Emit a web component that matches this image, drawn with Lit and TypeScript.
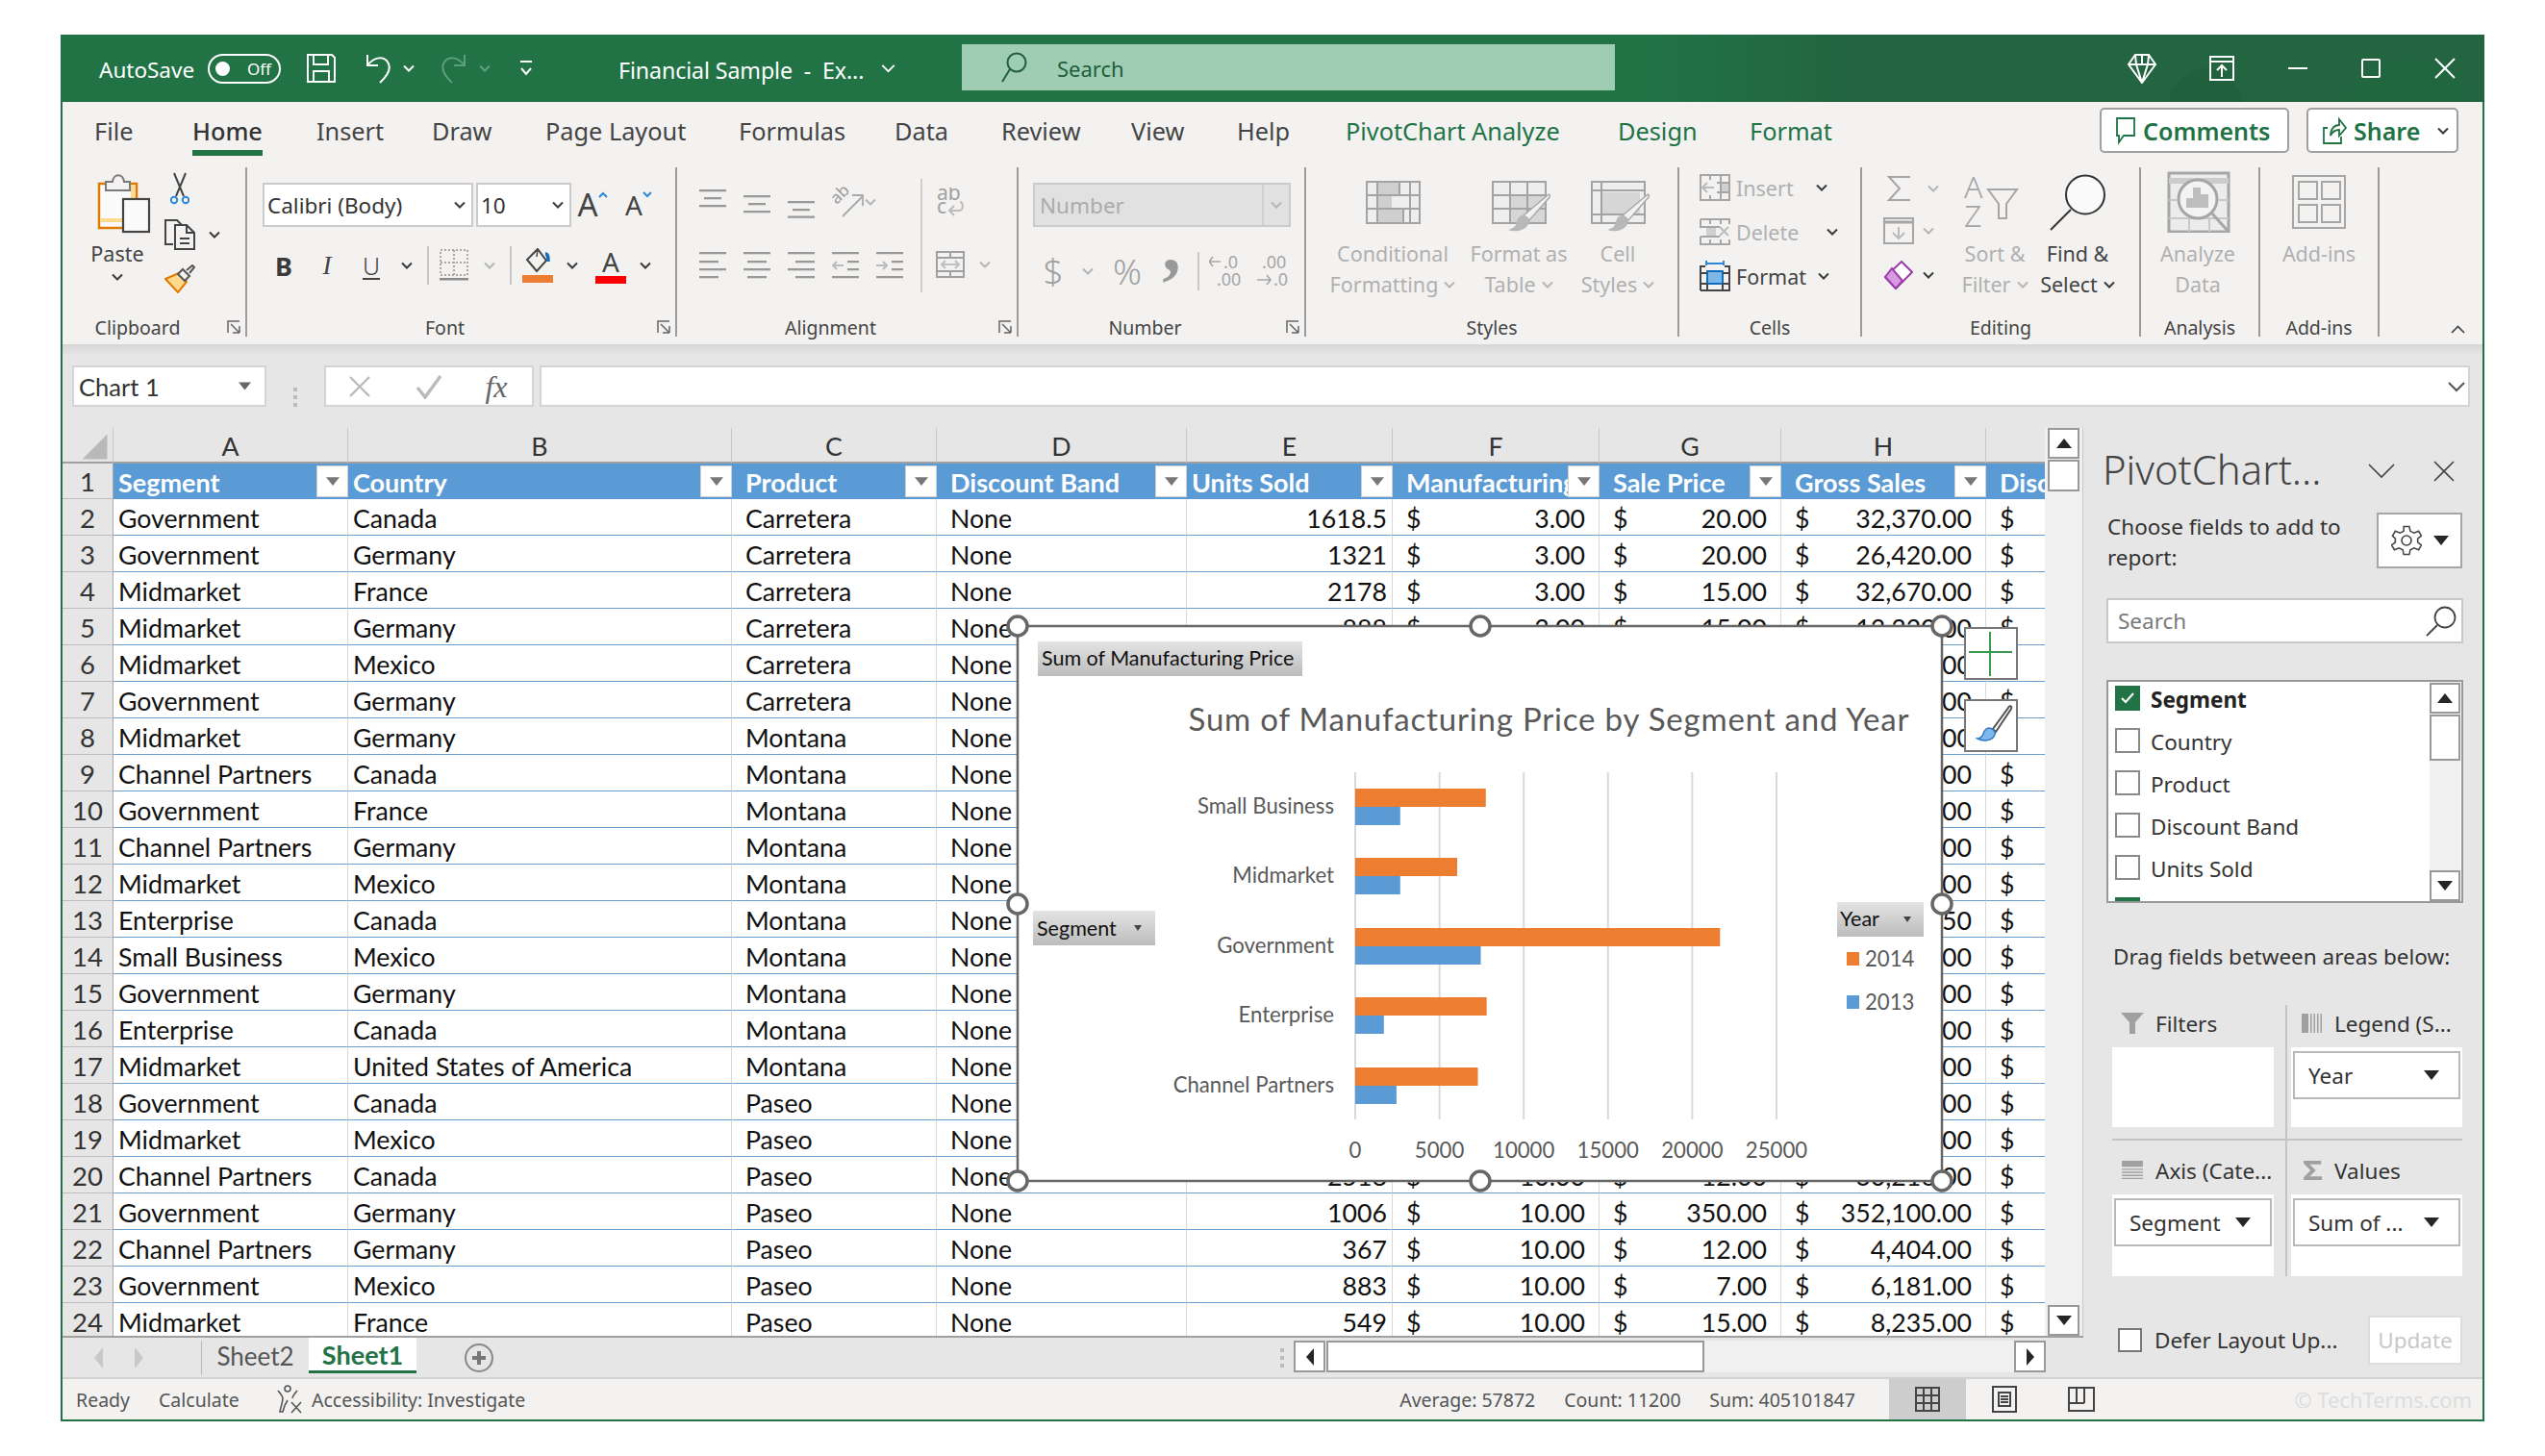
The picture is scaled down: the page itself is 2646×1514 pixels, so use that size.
import { LitElement, html, svg, css } from 'lit';
import { customElement } from 'lit/decorators.js';

const chev = (cls = '') => html`<svg class="chev ${cls}" viewBox="0 0 12 8"><path d="M1 1.5l5 5 5-5"/></svg>`;
const triDown = html`<svg class="tri" viewBox="0 0 16 10"><path d="M0 0h16L8 10z"/></svg>`;
const triUp = html`<svg class="tri" viewBox="0 0 16 10"><path d="M0 10h16L8 0z"/></svg>`;
const launcher = html`<svg class="launch" viewBox="0 0 14 14"><path d="M1 13V1h12M13 13V6M13 13H6M13 13L4 4"/></svg>`;
// one alignment glyph: each bar is [y, x from, x to]
const bars = (list: number[][]) => html`<svg class="i28" viewBox="0 0 28 34">${list.map(b => svg`<rect x=${b[1]} y=${b[0]} width=${b[2] - b[1]} height="2.3" fill="#999"></rect>`)}</svg>`;

const GRID_COLS = [
  { l: '', w: 53 }, { l: 'A', w: 244 }, { l: 'B', w: 399 }, { l: 'C', w: 213 }, { l: 'D', w: 260 },
  { l: 'E', w: 214 }, { l: 'F', w: 215 }, { l: 'G', w: 189 }, { l: 'H', w: 213 }, { l: '', w: 61 },
];
const HEADERS = ['Segment', 'Country', 'Product', 'Discount Band', 'Units Sold', 'Manufacturing Price', 'Sale Price', 'Gross Sales', 'Discounts'];
const ROWS: [string, string, string, string, string, string, string][] = [
  ['Government', 'Canada', 'Carretera', '1618.5', '3.00', '20.00', '32,370.00'],
  ['Government', 'Germany', 'Carretera', '1321', '3.00', '20.00', '26,420.00'],
  ['Midmarket', 'France', 'Carretera', '2178', '3.00', '15.00', '32,670.00'],
  ['Midmarket', 'Germany', 'Carretera', '888', '3.00', '15.00', '13,320.00'],
  ['Midmarket', 'Mexico', 'Carretera', '2470', '3.00', '15.00', '37,050.00'],
  ['Government', 'Germany', 'Carretera', '1513', '3.00', '350.00', '529,550.00'],
  ['Midmarket', 'Germany', 'Montana', '921', '5.00', '15.00', '13,815.00'],
  ['Channel Partners', 'Canada', 'Montana', '2518', '5.00', '12.00', '30,216.00'],
  ['Government', 'France', 'Montana', '1899', '5.00', '20.00', '37,980.00'],
  ['Channel Partners', 'Germany', 'Montana', '1545', '5.00', '12.00', '18,540.00'],
  ['Midmarket', 'Mexico', 'Montana', '2470', '5.00', '15.00', '37,050.00'],
  ['Enterprise', 'Canada', 'Montana', '2665.5', '5.00', '125.00', '333,187.50'],
  ['Small Business', 'Mexico', 'Montana', '958', '5.00', '300.00', '287,400.00'],
  ['Government', 'Germany', 'Montana', '2146', '5.00', '7.00', '15,022.00'],
  ['Enterprise', 'Canada', 'Montana', '345', '5.00', '125.00', '43,125.00'],
  ['Midmarket', 'United States of America', 'Montana', '615', '5.00', '15.00', '9,225.00'],
  ['Government', 'Canada', 'Paseo', '292', '10.00', '20.00', '5,840.00'],
  ['Midmarket', 'Mexico', 'Paseo', '974', '10.00', '15.00', '14,610.00'],
  ['Channel Partners', 'Canada', 'Paseo', '2518', '10.00', '12.00', '30,216.00'],
  ['Government', 'Germany', 'Paseo', '1006', '10.00', '350.00', '352,100.00'],
  ['Channel Partners', 'Germany', 'Paseo', '367', '10.00', '12.00', '4,404.00'],
  ['Government', 'Mexico', 'Paseo', '883', '10.00', '7.00', '6,181.00'],
  ['Midmarket', 'France', 'Paseo', '549', '10.00', '15.00', '8,235.00'],
];

// chart numbers, pixels per unit come from the gridlines
const AXIS_X = 1409;
const UNIT = 87.6 / 5000;
const SERIES = [
  { name: 'Small Business', y: 820, a: 7750, b: 2670 },
  { name: 'Midmarket', y: 892, a: 6050, b: 2670 },
  { name: 'Government', y: 965, a: 21650, b: 7450 },
  { name: 'Enterprise', y: 1037, a: 7800, b: 1700 },
  { name: 'Channel Partners', y: 1110, a: 7280, b: 2450 },
];
const TICKS = [0, 5000, 10000, 15000, 20000, 25000];
const FIELDS = ['Segment', 'Country', 'Product', 'Discount Band', 'Units Sold', 'Year'];

@customElement('app-root')
export class AppRoot extends LitElement {
  static styles = css`
    :host { display: block; width: 2646px; height: 1514px; background: #fff; font-family: 'Noto Sans', sans-serif; color: #444; overflow: hidden; }
    svg { display: block; flex: none; }
    .i28 { width: 28px; height: 34px; }
    .window { box-sizing: border-box; margin: 36px 0 0 63px; width: 2520px; height: 1442px; border: 2px solid #217346; border-top: 0; display: flex; flex-direction: column; background: #f3f2f1; }

    /* title bar */
    .title { height: 70px; flex: none; display: grid; align-items: center; justify-items: center; color: #fff; margin: 0 -2px; padding: 0 2px;
      grid-template-columns: 38px 113px 76px 26px 32px 30px 28px 34px 14px 29px 38px 48px 72px 270px 20px 67px 679px 1fr 74px 92px 66px 86px 68px 5px;
      background: radial-gradient(ellipse 70px 90px at 2230px 90px, #20603c 60%, transparent 62%), radial-gradient(ellipse 100px 70px at 2440px 70px, #20663f 60%, transparent 62%), linear-gradient(90deg, #217346 0, #217346 1650px, #226540 1850px, #226540 100%); }
    .title .left { justify-self: start; margin-top: 3px; }
    .title-text { font-size: 23.2px; white-space: pre; letter-spacing: -0.1px; }
    .autosave { font-size: 22.5px; }
    .toggle { box-sizing: border-box; width: 76px; height: 31px; border: 2px solid #fff; border-radius: 16px; display: flex; align-items: center; justify-content: space-between; padding: 0 8px 0 6px; font-size: 17px; }
    .toggle i { width: 15px; height: 15px; background: #fff; border-radius: 50%; }
    .search { box-sizing: border-box; width: 679px; height: 48px; background: #9fcdb3; display: flex; align-items: center; padding-left: 40px; gap: 31px; color: #215e3d; font-size: 22px; margin-top: -2px; }
    .search span { margin-top: 2px; }
    .title svg.w { stroke: #fff; fill: none; stroke-width: 2; }
    .title svg.w.dim { stroke: #5c9f7b; }
    .title .chev { stroke: #fff; }
    .title .chev.dim { stroke: #5c9f7b; }
    .chev { width: 12px; height: 8px; fill: none; stroke: #3a3a3a; stroke-width: 2; }
    .chev.big { width: 17px; height: 10px; stroke-width: 1.5; }
    .chev.gray { stroke: #b5b5b5; }
    .tri { width: 16px; height: 10px; fill: #262626; }

    /* tabs */
    .tabs { height: 66px; flex: none; box-sizing: border-box; padding: 4px 0 0 33px; display: grid; align-items: start; font-size: 25.3px;
      grid-template-columns: 102px 129px 120px 118px 201px 162px 111px 135px 110px 113px 283px 137px 364px 197px 18px 158px; }
    .tab { height: 52px; line-height: 52px; color: #444; white-space: nowrap; }
    .tab.on span { display: inline-block; box-sizing: border-box; height: 52px; border-bottom: 6px solid #217346; font-weight: 500; color: #333; }
    .tab.ctx { color: #217346; }
    .tbtn { box-sizing: border-box; height: 47px; margin-top: 2px; border: 2px solid #a0a0a0; border-radius: 5px; background: #fff; color: #217346; font-weight: 600; font-size: 25px; display: flex; align-items: center; gap: 7px; padding-left: 14px; }
    .tbtn .chev { margin-left: 11px; }
    .tbtn svg.ic { fill: none; stroke: #217346; stroke-width: 1.8; }

    /* ribbon */
    .ribbon { height: 186px; flex: none; box-sizing: border-box; padding-top: 2px; display: flex; }
    .group { box-sizing: border-box; height: 176px; border-right: 2px solid #9c9c9c; display: flex; flex-direction: column; flex: none; }
    .g-clip { width: 192px; } .g-font { width: 447px; } .g-align { width: 355px; } .g-num { width: 299px; }
    .g-styles { width: 388px; } .g-cells { width: 190px; } .g-edit { width: 290px; } .g-ana { width: 124px; } .g-add { width: 124px; }
    .body { flex: 1; display: flex; min-height: 0; }
    .label { height: 20px; display: flex; align-items: center; font-size: 19.5px; color: #444; }
    .label span { flex: 1; text-align: center; }
    .launch { width: 14px; height: 14px; margin: 0 5px 0 15px; fill: none; stroke: #666; stroke-width: 1.5; }
    .center { display: grid; place-items: center; }

    .paste { margin-left: 20px; width: 74px; padding-top: 6px; display: flex; flex-direction: column; align-items: center; }
    .paste .t { height: 40px; line-height: 40px; font-size: 21.5px; }
    .smalls { width: 72px; }
    .smalls div { display: grid; grid-template-columns: 56px 16px; place-items: center; }
    .s1 { height: 44px; } .s2 { height: 52px; } .s3 { height: 40px; }

    .f-col { padding-left: 16px; }
    .f1 { margin-top: 16px; height: 46px; display: grid; grid-template-columns: 219px 3px 99px 44px 52px; align-items: stretch; }
    .f2 { margin-top: 20px; height: 38px; display: grid; grid-template-columns: 44px 46px 46px 28px 16px 38px 36px 8px 48px 24px 56px 16px; place-items: center; }
    .combo { box-sizing: border-box; background: #fff; border: 2px solid #cbcbcb; display: flex; align-items: center; justify-content: space-between; padding: 0 6px 0 3px; font-size: 22.5px; color: #333; }
    .grow { display: flex; align-items: flex-start; justify-content: center; font-weight: 300; line-height: 46px; color: #444; }
    .grow b { font-weight: 400; }
    .g1 { font-size: 33px; } .g2 { font-size: 28px; }
    .grow svg { margin-top: 9px; width: 10px; height: 7px; fill: none; stroke: #2b88d8; stroke-width: 2; }
    .bold { font-weight: 700; font-size: 27px; color: #3a3a3a; }
    .ital { font-style: italic; font-size: 27px; font-family: 'Liberation Serif', serif; color: #444; }
    .und { font-size: 25px; text-decoration: underline; text-decoration-thickness: 2px; color: #444; text-underline-offset: 3px; font-weight: 300; }
    .vsep { width: 2px; height: 40px; background: #c8c8c8; }
    .colorA { display: flex; flex-direction: column; align-items: center; font-size: 28px; line-height: 30px; color: #444; }
    .swatch { height: 8px; width: 32px; }
    .sw-o { background: #ed7d31; } .sw-r { background: #ff0000; }

    .a-left { width: 253px; padding: 12px 0 0 23px; box-sizing: border-box; }
    .a1 { height: 48px; display: grid; grid-template-columns: 46px 46px 46px 34px 24px; align-items: center; justify-items: start; }
    .a2 { margin-top: 22px; height: 38px; display: grid; grid-template-columns: 46px 46px 46px 46px 28px; align-items: center; justify-items: start; }
    .a-sep { margin-top: 12px; width: 2px; height: 118px; background: #cfcfcf; }
    .a-right { padding-top: 12px; }
    .a-right .r1 { height: 48px; width: 58px; display: grid; place-items: center; }
    .a-right .r2 { margin-top: 22px; height: 38px; display: grid; grid-template-columns: 58px 14px; place-items: center; }
    .n-col { padding-left: 15px; }
    .combo.off { width: 268px; height: 46px; margin-top: 16px; background: #e1e1e1; padding: 0 0 0 5px; color: #ababab; }
    .combo.off em { height: 100%; width: 26px; border-left: 2px solid #d0d0d0; display: grid; place-items: center; }
    .n2 { margin-top: 20px; height: 38px; display: grid; grid-template-columns: 42px 30px 52px 40px 16px 42px 52px; place-items: center; color: #a0a0a0; font-size: 37px; font-weight: 300; }
    .n2 .cm { font-family: 'Liberation Serif', serif; font-weight: 700; font-size: 78px; line-height: 38px; margin-top: -52px; color: #999; }
    .dec { font-size: 18px; font-weight: 400; }
    .wrap { font-size: 21px; }
    .rot { font-size: 17px; }

    .big { display: flex; flex-direction: column; align-items: center; flex: none; }
    .big .ic { display: grid; place-items: center; }
    .t1, .t2 { height: 32px; line-height: 32px; font-size: 21.5px; white-space: nowrap; display: flex; align-items: center; gap: 6px; }
    .off-t { color: #b0b0b0; }
    .st1 { width: 140px; margin-left: 20px; } .st2 { width: 122px; } .st3 { width: 84px; }
    .st-ic { margin-top: 14px; height: 46px; }
    .st-ic svg { overflow: visible; }
    .lbl { margin-top: 14px; }
    .c-col { padding-left: 21px; margin-top: -2px; }
    .c-row { height: 46px; display: flex; align-items: center; font-size: 21.5px; gap: 6px; }
    .c-row span { display: block; }
    .w80 { width: 77px; } .w91 { width: 88px; } .w82 { width: 79px; }
    .e-col { width: 100px; padding-left: 22px; box-sizing: border-box; }
    .e-row { display: grid; align-items: center; justify-items: center; }
    .h43 { height: 43px; grid-template-columns: 32px 40px; } .h46 { height: 46px; grid-template-columns: 32px 30px; }
    .sort { width: 76px; } .find { width: 96px; }
    .e-ic { margin-top: 6px; height: 60px; }
    .az { font-size: 32px; font-weight: 300; fill: #a6a6a6; }
    .lbl8 { margin-top: 8px; }
    .ana { width: 118px; }
    .ana-ic { margin-top: 4px; height: 64px; }
    .lbl6 { margin-top: 6px; }
    .add { width: 122px; }
    .collapse { margin: auto 0 2px 74px; width: 12px; height: 18px; }
    .collapse svg { width: 15px; height: 9px; fill: none; stroke: #444; stroke-width: 1.7; }

    /* formula bar */
    .fbar { height: 87px; flex: none; box-sizing: border-box; padding: 22px 13px 0 10px; display: flex; background: linear-gradient(180deg, #d6d6d6 0, #e6e6e6 12px); }
    .fbox { box-sizing: border-box; height: 43px; background: #fff; border: 2px solid #d4d4d4; }
    .name { width: 202px; display: flex; align-items: center; justify-content: space-between; padding: 0 14px 0 5px; font-size: 25.5px; font-family: Lato, sans-serif; color: #333; }
    .name .tri { width: 13px; height: 9px; fill: #666; }
    .dots { width: 60px; display: grid; place-items: center; }
    .fx { width: 218px; display: grid; grid-template-columns: 69px 50px 70px; padding-left: 23px; align-items: center; color: #bbb; font-family: 'Liberation Serif', serif; font-style: italic; font-size: 32px; }
    .fx b { font-weight: 400; color: #666; justify-self: center; line-height: 36px; }
    .input { margin-left: 6px; flex: 1; display: flex; align-items: center; justify-content: flex-end; padding-right: 2px; }

    /* sheet */
    .main { flex: 1; min-height: 0; display: flex; background: #e6e6e6; }
    .left { width: 2101px; flex: none; display: flex; flex-direction: column; }
    .sheet { height: 944px; flex: none; display: flex; }
    .gridwrap { width: 2061px; flex: none; position: relative; overflow: hidden; }
    .grid { display: grid; grid-auto-rows: 38px; grid-template-rows: 37px 37px; background: #fff; font: 26.7px/1.25 Lato, sans-serif; color: #111; }
    .c { box-sizing: border-box; border-right: 1px solid #d9d9d9; border-bottom: 1px solid #6a9fd0; display: flex; align-items: center; white-space: nowrap; overflow: hidden; padding: 5px 0 0 14px; }
    .c.p5 { padding-left: 5px; }
    .c.num { justify-content: flex-end; padding: 5px 5px 0 0; }
    .c.acc { justify-content: space-between; padding: 5px 14px 0 14px; }
    .c.last { border-right: 0; }
    .ch { box-sizing: border-box; background: #e6e6e6; border-right: 1px solid #c8c8c8; border-bottom: 2px solid #a0a0a0; display: flex; align-items: center; justify-content: center; color: #333; padding-top: 4px; }
    .ch.last { border-right: 0; }
    .rh { box-sizing: border-box; background: #e6e6e6; border-right: 1px solid #a8a8a8; border-bottom: 1px solid #bdbdbd; display: flex; align-items: center; justify-content: center; color: #333; font-size: 27.5px; padding-top: 3px; }
    .hd { box-sizing: border-box; background: #5b9bd5; color: #fff; font-weight: 700; display: flex; align-items: center; overflow: hidden; white-space: nowrap; padding-left: 14px; font-size: 27px; }
    .hd.p5 { padding-left: 5px; }
    .hd span { flex: 1; min-width: 0; overflow: hidden; padding-top: 2px; }
    .flt { flex: none; box-sizing: border-box; width: 33px; height: 33px; background: #fff; border: 1px solid #d0d0d0; display: grid; place-items: center; }
    .flt .tri { width: 14px; height: 9px; fill: #777; }
    .corner { width: 100%; height: 100%; }
    .chart { position: absolute; left: 992px; top: 206px; width: 962px; height: 577px; overflow: visible; }
    .ttl { font: 33px Lato, sans-serif; fill: #595959; }
    .cat { font: 22.2px Lato, sans-serif; fill: #595959; }
    .pb { font: 21.5px Lato, sans-serif; fill: #111; }

    .vbar { width: 40px; flex: none; box-sizing: border-box; background: #f0f0f0; border-right: 1px solid #c8c8c8; padding-left: 3px; display: flex; flex-direction: column; }
    .sb { box-sizing: border-box; background: #fff; border: 2px solid #999; display: grid; place-items: center; }
    .vbtn { width: 33px; height: 32px; flex: none; }
    .vth { width: 33px; height: 33px; margin-top: 1px; flex: none; }
    .vbtn.end { margin-top: auto; }
    .bottom { height: 43px; flex: none; box-sizing: border-box; border-top: 2px solid #a0a0a0; display: flex; }
    .nav { width: 145px; box-sizing: border-box; border-right: 1px solid #bbb; height: 36px; margin-top: 3px; padding-left: 33px; display: grid; grid-template-columns: 42px 20px; align-items: center; }
    .nav svg { width: 9px; height: 22px; fill: #c9c9c9; }
    .sht { width: 111px; text-align: center; font: 26px/38px Lato, sans-serif; color: #555; }
    .sht.on { box-sizing: border-box; width: 112px; height: 37px; background: #fff; border-bottom: 3px solid #217346; color: #217346; font-weight: 700; font-size: 27px; line-height: 35px; }
    .plus { width: 130px; display: grid; place-items: center; height: 41px; }
    .hdots { width: 24px; margin-left: 758px; height: 41px; display: grid; place-items: center; }
    .hbar { width: 782px; height: 33px; margin-top: 3px; background: #f0f0f0; display: flex; flex: none; }
    .hbtn { width: 33px; height: 33px; flex: none; }
    .hth { width: 393px; height: 33px; margin-left: 1px; flex: none; }
    .hbtn.end { margin-left: auto; }
    .hbar svg.ar { width: 8px; height: 18px; fill: #262626; }

    /* task pane */
    .pane { width: 415px; flex: none; box-sizing: border-box; padding: 12px 21px 0 24px; color: #333; font-size: 22.5px; }
    .p-title { height: 60px; margin-left: -4px; display: flex; align-items: center; font-size: 41.8px; font-weight: 300; color: #444; }
    .p-title span { width: 276px; }
    .p-title svg { fill: none; stroke: #444; stroke-width: 1.6; margin-top: 6px; }
    .p-title svg.x { margin-left: 40px; }
    .p-choose { margin: 16px 0 0 1px; height: 58px; display: flex; justify-content: space-between; line-height: 32px; }
    .p-choose .txt { margin-top: -1px; white-space: pre; }
    .gear { box-sizing: border-box; width: 89px; height: 58px; background: #fff; border: 2px solid #a6a6a6; display: flex; align-items: center; justify-content: center; gap: 12px; }
    .gear svg.g { fill: none; stroke: #444; stroke-width: 1.6; }
    .p-search { box-sizing: border-box; margin-top: 31px; height: 47px; width: 371px; background: #fff; border: 2px solid #c8c8c8; display: flex; align-items: center; justify-content: space-between; padding: 0 5px 0 10px; color: #7a7a7a; }
    .list { box-sizing: border-box; margin-top: 38px; height: 232px; width: 371px; background: #fff; border: 2px solid #999; display: flex; overflow: hidden; }
    .items { flex: 1; padding: 4px 0 0 7px; }
    .item { height: 44px; display: flex; align-items: flex-start; gap: 11px; line-height: 30px; color: #333; }
    .item b { font-weight: 700; color: #222; }
    .cb { box-sizing: border-box; width: 26px; height: 26px; flex: none; background: #fff; border: 2px solid #888; }
    .cb.on { background: #217346; border-color: #217346; display: grid; place-items: center; }
    .cb.on svg { fill: none; stroke: #fff; stroke-width: 2; width: 14px; height: 12px; }
    .lscroll { width: 32px; margin-right: 1px; background: #f0f0f0; display: flex; flex-direction: column; }
    .lscroll .b1 { height: 32px; width: 32px; margin-top: 1px; flex: none; }
    .lscroll .b2 { height: 48px; width: 32px; margin-top: 1px; flex: none; }
    .lscroll .b3 { height: 32px; width: 32px; margin-top: auto; flex: none; }
    .drag { margin: 41px 0 0 7px; height: 30px; line-height: 30px; white-space: nowrap; }
    .areas { margin: 35px 0 0 6px; display: grid; grid-template-columns: 168px 12px 2px 4px 178px; grid-template-rows: 127px 12px 2px 12px 129px; }
    .ar-v { grid-column: 3; grid-row: 1 / -1; background: #c4c4c4; }
    .ar-h { grid-column: 1 / -1; grid-row: 3; background: #c4c4c4; }
    .area { display: flex; flex-direction: column; min-width: 0; }
    .a-tl { grid-column: 1; grid-row: 1; } .a-tr { grid-column: 5; grid-row: 1; }
    .a-bl { grid-column: 1; grid-row: 5; } .a-br { grid-column: 5; grid-row: 5; }
    .a-head { height: 44px; flex: none; box-sizing: border-box; padding: 0 0 6px 9px; display: flex; align-items: center; white-space: nowrap; }
    .a-head.r { padding-left: 11px; }
    .a-head svg { width: 24px; margin-right: 12px; fill: #a0a0a0; }
    .a-head.r svg { margin-right: 10px; }
    .a-box { flex: 1; background: #fff; padding: 4px 2px; box-sizing: border-box; }
    .pill { box-sizing: border-box; height: 50px; background: #fff; border: 2px solid #b8b8b8; display: flex; align-items: center; justify-content: space-between; padding: 0 20px 0 14px; }
    .defer { margin: 41px 0 0 12px; display: flex; align-items: center; height: 51px; width: 358px; }
    .defer .cb { width: 25px; height: 25px; border-color: #777; margin-right: 13px; }
    .update { margin-left: auto; box-sizing: border-box; width: 98px; height: 51px; background: #fff; border: 2px solid #ddd; color: #c8c8c8; display: grid; place-items: center; }

    /* status */
    .status { height: 44px; flex: none; box-sizing: border-box; border-top: 2px solid #d2d2d2; display: flex; align-items: center; font-size: 19.5px; color: #555; background: #f3f2f1; }
    .status span { white-space: nowrap; }
    .s-ready { margin-left: 14px; width: 86px; }
    .s-calc { width: 123px; }
    .s-acc { margin-right: 8px; }
    .s-av { margin-left: 909px; width: 171px; }
    .s-co { width: 151px; }
    .s-su { width: 187px; }
    .vbtns { display: grid; grid-template-columns: 80px 80px 80px; height: 42px; }
    .vbtns div { display: grid; place-items: center; }
    .vbtns .on { background: #cdcdcd; }
    .vbtns svg { fill: none; stroke: #444; stroke-width: 2; }
    .mark { margin-left: 181px; color: #ddd; font-size: 22px; }
  `;

  private renderTitle() {
    return html`<div class="title">
      <i></i>
      <span class="autosave left">AutoSave</span>
      <div class="toggle"><i></i><span>Off</span></div>
      <i></i>
      <svg class="w" width="32" height="32" viewBox="0 0 32 32"><path d="M2 2h25l3 3v25H2zM8 2v10h15V2M8 30V19h16v11"/></svg>
      <i></i>
      <svg class="w" width="28" height="32" viewBox="0 0 28 32"><path d="M2 2v11h11M2 13C8 5 17 3 22 8c5 6 3 14-7 23"/></svg>
      ${chev()}
      <i></i>
      <svg class="w dim" width="28" height="32" viewBox="0 0 28 32"><path d="M26 2v11H15M26 13C20 5 11 3 6 8c-5 6-3 14 7 23"/></svg>
      ${chev('dim')}
      <svg width="14" height="18" viewBox="0 0 14 18" fill="none" stroke="#fff" stroke-width="2"><path d="M1 2h12M2 9l5 6 5-6"/></svg>
      <i></i>
      <span class="title-text left">Financial Sample  -  Ex...</span>
      ${chev('big')}
      <i></i>
      <div class="search">
        <svg width="28" height="32" viewBox="0 0 28 32" fill="none" stroke="#215e3d" stroke-width="2"><circle cx="17" cy="11" r="9.5"/><path d="M10 18L2 31"/></svg>
        <span>Search</span>
      </div>
      <i></i>
      <svg class="w" width="32" height="32" viewBox="0 0 32 32"><path d="M9 2h14l7 10-14 19L2 12zM2 12h28M10 12l6 19 6-19M9 2l1 10M23 2l-1 10M16 2v10"/></svg>
      <svg class="w" width="26" height="26" viewBox="0 0 26 26"><path d="M1 1h24v24H1zM1 6h24M13 22V11M8 15l5-5 5 5"/></svg>
      <svg width="20" height="3"><rect width="20" height="2" fill="#fff"></rect></svg>
      <svg class="w" width="20" height="20" viewBox="0 0 20 20"><rect x="1" y="1" width="18" height="18" rx="1"/></svg>
      <svg class="w" width="22" height="22" viewBox="0 0 22 22"><path d="M1 1l20 20M21 1L1 21"/></svg>
      <i></i>
    </div>`;
  }

  private renderTabs() {
    const tabs = ['File', 'Home', 'Insert', 'Draw', 'Page Layout', 'Formulas', 'Data', 'Review', 'View', 'Help'];
    return html`<div class="tabs">
      ${tabs.map(t => html`<div class="tab ${t === 'Home' ? 'on' : ''}"><span>${t}</span></div>`)}
      ${['PivotChart Analyze', 'Design', 'Format'].map(t => html`<div class="tab ctx">${t}</div>`)}
      <div class="tbtn">
        <svg class="ic" width="22" height="30" viewBox="0 0 22 30"><path d="M2 2h18v18H9l-5 7v-7H2z"/></svg>
        <span>Comments</span>
      </div>
      <i></i>
      <div class="tbtn">
        <svg class="ic" width="26" height="30" viewBox="0 0 26 30"><path d="M6 12H2v16h18v-7M9 20c0-7 4-11 9-11V3l7 9-7 8v-6c-4 0-7 2-9 6z"/></svg>
        <span>Share</span>
        ${chev()}
      </div>
    </div>`;
  }

  private renderClipboard() {
    return html`<div class="group g-clip">
      <div class="body">
        <div class="paste">
          <svg width="74" height="64" viewBox="0 0 74 64">
            <rect x="18" y="11" width="39" height="46" fill="#fafafa" stroke="#e07b00" stroke-width="2.5"></rect>
            <path d="M20 51h35V13h-4v34H20z" fill="#ffd98e"></path>
            <path d="M25 18V9h7c1-9 11-9 12 0h6v9z" fill="#f3f2f1" stroke="#7a7a7a" stroke-width="2"></path>
            <rect x="43" y="27" width="27" height="34" fill="#fafafa" stroke="#444" stroke-width="2.2"></rect>
          </svg>
          <div class="t">Paste</div>
          ${chev()}
        </div>
        <div class="smalls">
          <div class="s1">
            <svg width="20" height="36" viewBox="0 0 20 36" fill="none" stroke-width="2">
              <path d="M4 2l10 24M16 2L6 26" stroke="#444"></path>
              <circle cx="4" cy="30" r="3.200" stroke="#2b88d8"></circle><circle cx="16" cy="30" r="3.200" stroke="#2b88d8"></circle>
            </svg>
            <i></i>
          </div>
          <div class="s2">
            <svg width="32" height="32" viewBox="0 0 32 32" fill="none" stroke="#444" stroke-width="2">
              <path d="M9 26H1V1h12l5 5"/><path d="M11 6h12l8 8v17H11zM23 6v8h8M16 20h10M16 25h10"/>
            </svg>
            ${chev()}
          </div>
          <div class="s3">
            <svg width="32" height="30" viewBox="0 0 32 30" fill="none" stroke-width="2">
              <path d="M1 15l14-6 8 9-9 11z" fill="#ffd98e" stroke="#e07b00"></path>
              <path d="M14 10l5-5 7 7-5 5z" fill="#f3f2f1" stroke="#555"></path>
              <path d="M23 6l6-5 2 2-5 6" fill="#f3f2f1" stroke="#555"></path>
            </svg>
            <i></i>
          </div>
        </div>
      </div>
      <div class="label"><span>Clipboard</span>${launcher}</div>
    </div>`;
  }

  private renderFont() {
    return html`<div class="group g-font">
      <div class="body"><div class="f-col">
        <div class="f1">
          <div class="combo">Calibri (Body) ${chev()}</div><i></i>
          <div class="combo">10 ${chev()}</div>
          <div class="grow g1"><b>A</b><svg viewBox="0 0 10 7"><path d="M1 6l4-4 4 4"/></svg></div>
          <div class="grow g2"><b>A</b><svg viewBox="0 0 10 7"><path d="M1 1l4 4 4-4"/></svg></div>
        </div>
        <div class="f2">
          <span class="bold">B</span><span class="ital">I</span><span class="und">U</span>${chev()}
          <div class="vsep"></div>
          <svg width="30" height="36" viewBox="0 0 30 36" fill="none" stroke="#a8a8a8" stroke-width="2" stroke-dasharray="2 2"><path d="M1 2h28v26H1zM15 2v26M1 15h28"/><rect x="0" y="31" width="30" height="2.500" fill="#8c8c8c" stroke="none"></rect></svg>
          ${chev('gray')}
          <div class="vsep"></div>
          <div class="center">
            <svg width="32" height="28" viewBox="0 0 32 28" fill="none" stroke="#444" stroke-width="2"><path d="M16 1L5 12l10 12 10-11z"/><path d="M16 1l-1 8" stroke-width="1.500"></path><path d="M24 6c3 0 3 4 3 8" stroke="#106ebe" stroke-width="3.500"></path></svg>
            <div class="swatch sw-o"></div>
          </div>
          ${chev()}
          <div class="colorA">A<div class="swatch sw-r"></div></div>
          ${chev()}
        </div>
      </div></div>
      <div class="label"><span>Font</span>${launcher}</div>
    </div>`;
  }

  private renderAlignment() {
    const l4 = bars([[4, 0, 28], [13, 0, 20], [21, 0, 28], [29, 0, 20]]);
    const c4 = bars([[4, 0, 28], [13, 4, 24], [21, 0, 28], [29, 4, 24]]);
    const r4 = bars([[4, 0, 28], [13, 8, 28], [21, 0, 28], [29, 8, 28]]);
    return html`<div class="group g-align">
      <div class="body">
        <div class="a-left">
          <div class="a1">
            ${bars([[4, 0, 28], [12, 5, 23], [20, 0, 28]])}
            ${bars([[10, 0, 28], [18, 5, 23], [26, 0, 28]])}
            ${bars([[16, 0, 28], [24, 5, 23], [31.5, 0, 28]])}
            <svg width="34" height="34" viewBox="0 0 34 34" fill="none" stroke="#aaa" stroke-width="1.800">
              <path d="M11 32L32 11M21 10h11v11"/>
              <text class="rot" fill="#999" stroke="none" transform="translate(5 20) rotate(-45)">ab</text>
            </svg>
            ${chev('gray')}
          </div>
          <div class="a2">
            ${l4}${c4}${r4}
            <svg class="i28" viewBox="0 0 28 34"><path d="M0 4h28v2.300H0zM16 13h12v2.300H16zM16 21h12v2.300H16zM0 29h28v2.300H0z" fill="#999"></path><path d="M12 18H1M5 14l-4 4 4 4" fill="none" stroke="#bbb" stroke-width="2"></path></svg>
            <svg class="i28" viewBox="0 0 28 34"><path d="M0 4h28v2.300H0zM16 13h12v2.300H16zM16 21h12v2.300H16zM0 29h28v2.300H0z" fill="#999"></path><path d="M0 18h11M7 14l4 4-4 4" fill="none" stroke="#bbb" stroke-width="2"></path></svg>
          </div>
        </div>
        <div class="a-sep"></div>
        <div class="a-right">
          <div class="r1">
            <svg width="30" height="30" viewBox="0 0 30 30">
              <text class="wrap" x="1" y="13" fill="#a0a0a0">ab</text>
              <text class="wrap" x="1" y="27" fill="#a0a0a0">c</text>
              <path d="M25 15c4 0 4 9-1 9H14M19 19l-5 5 5 5" fill="none" stroke="#bbb" stroke-width="2"></path>
            </svg>
          </div>
          <div class="r2">
            <svg width="30" height="28" viewBox="0 0 30 28" fill="none" stroke="#a0a0a0" stroke-width="2"><path d="M1 1h28v26H1zM1 7h28M1 21h28M15 1v6M15 21v6"/><path d="M6 14h18M10 10l-4 4 4 4M20 10l4 4-4 4" stroke="#c0c0c0"></path></svg>
            ${chev('gray')}
          </div>
        </div>
      </div>
      <div class="label"><span>Alignment</span>${launcher}</div>
    </div>`;
  }

  private renderNumber() {
    return html`<div class="group g-num">
      <div class="body"><div class="n-col">
        <div class="combo off"><span>Number</span><em>${chev('gray')}</em></div>
        <div class="n2">
          <span>$</span>${chev('gray')}<span>%</span><span class="cm">,</span>
          <div class="vsep"></div>
          <svg width="36" height="36" viewBox="0 0 36 36"><text class="dec" x="15" y="15" fill="#a6a6a6">.0</text><text class="dec" x="8" y="33" fill="#a6a6a6">.00</text><path d="M0 8h12M4 3L0 8l4 5" fill="none" stroke="#a6a6a6" stroke-width="1.6"></path></svg>
          <svg width="36" height="36" viewBox="0 0 36 36"><text class="dec" x="8" y="15" fill="#a6a6a6">.00</text><text class="dec" x="20" y="33" fill="#a6a6a6">.0</text><path d="M3 27h14M13 22l4 5-4 5" fill="none" stroke="#a6a6a6" stroke-width="1.6"></path></svg>
        </div>
      </div></div>
      <div class="label"><span>Number</span>${launcher}</div>
    </div>`;
  }

  private tableIcon(kind: number) {
    const brush = svg`<path d="M59 15c2-2 3 0 2 2L40 41l-6-5z" fill="#f3f2f1" stroke="#aaa" stroke-width="1.500"></path><path d="M34 36c-5 0-6 3-7 7-1 5-5 7-9 8 8 3 19 1 22-8 1-3-2-7-6-7z" fill="#b8b8b8"></path>`;
    return html`<svg width="58" height="46" viewBox="0 0 58 46">
      <rect x="2" y="1" width="55" height="43" fill="#eee"></rect>
      ${kind === 0 ? svg`<path d="M13 1h23v14H13zM13 15h15v14H13zM13 29h27v15H13z" fill="#cfcfcf"></path>` : ''}
      ${kind === 1 ? svg`<path d="M20 15h37v29H20z" fill="#d6d6d6"></path>` : ''}
      ${kind === 2 ? svg`<path d="M12 12h40v23H12z" fill="#d6d6d6"></path>` : ''}
      ${kind === 0 ? svg`<path d="M2 1h55v43H2zM2 15h55M2 29h55M13 1v43M36 1v14M40 29v15M47 1v43" fill="none" stroke="#a3a3a3" stroke-width="2"></path>` : ''}
      ${kind === 1 ? svg`<path d="M2 1h55v43H2zM2 15h55M2 29h55M20 1v43M38 1v43" fill="none" stroke="#a3a3a3" stroke-width="2"></path>` : ''}
      ${kind === 2 ? svg`<path d="M2 1h55v43H2zM2 10h55M2 35h55M12 1v43" fill="none" stroke="#a3a3a3" stroke-width="2"></path>` : ''}
      ${kind ? brush : ''}
    </svg>`;
  }

  private renderStyles() {
    return html`<div class="group g-styles">
      <div class="body off-t">
        <div class="big st1">
          <div class="ic st-ic">${this.tableIcon(0)}</div>
          <div class="t1 lbl">Conditional</div>
          <div class="t2">Formatting ${chev('gray')}</div>
        </div>
        <div class="big st2">
          <div class="ic st-ic">${this.tableIcon(1)}</div>
          <div class="t1 lbl">Format as</div>
          <div class="t2">Table ${chev('gray')}</div>
        </div>
        <div class="big st3">
          <div class="ic st-ic">${this.tableIcon(2)}</div>
          <div class="t1 lbl">Cell</div>
          <div class="t2">Styles ${chev('gray')}</div>
        </div>
      </div>
      <div class="label"><span>Styles</span></div>
    </div>`;
  }

  private renderCells() {
    const g = '#a6a6a6';
    return html`<div class="group g-cells">
      <div class="body"><div class="c-col">
        <div class="c-row off-t">
          <svg width="32" height="28" viewBox="0 0 32 28" fill="none" stroke=${g} stroke-width="2"><path d="M22 9h9v10h-9z" fill="#d0d0d0" stroke="none"></path><path d="M1 1h30v26H1zM18 9h13M18 19h13M22 1v26M11 1v5M11 22v5M1 1v6M1 21v6"/><path d="M15 14H3M8 9l-5 5 5 5" stroke="#bbb"></path></svg>
          <span class="w80">Insert</span>${chev()}
        </div>
        <div class="c-row off-t">
          <svg width="32" height="28" viewBox="0 0 32 28" fill="none" stroke=${g} stroke-width="2"><path d="M7 9h10v10H7z" fill="#d0d0d0" stroke="none"></path><path d="M1 1h30v5M1 1v8h20M1 19h20M1 19v8h30v-5M11 1v5M22 1v5M11 22v5M22 22v5"/><path d="M21 9l9 9M30 9l-9 9" stroke="#bbb"></path></svg>
          <span class="w91">Delete</span>${chev()}
        </div>
        <div class="c-row">
          <svg width="32" height="32" viewBox="0 0 32 32" fill="none" stroke-width="2"><rect x="8" y="11" width="16" height="13" fill="#7cb7e8" stroke="#106ebe"></rect><path d="M1 31V6h5M26 6h5v25H1M1 13h7M24 13h7M1 24h7M24 24h7M8 24v7M24 24v7" stroke="#444"></path><path d="M7 3h18M7 0v5M25 0v5" stroke="#2b88d8"></path></svg>
          <span class="w82">Format</span>${chev()}
        </div>
      </div></div>
      <div class="label"><span>Cells</span></div>
    </div>`;
  }

  private renderEditing() {
    return html`<div class="group g-edit">
      <div class="body">
        <div class="e-col">
          <div class="e-row h43">
            <svg width="26" height="28" viewBox="0 0 26 28" fill="none" stroke="#a6a6a6" stroke-width="2"><path d="M25 2H3l11 12L3 26h22"/></svg>
            ${chev('gray')}
          </div>
          <div class="e-row h46">
            <svg width="32" height="28" viewBox="0 0 32 28" fill="none" stroke="#a6a6a6" stroke-width="2"><path d="M1 1h30v26H1z"/><path d="M1 5h30" stroke-width="3"></path><path d="M16 10v12M10 16l6 6 6-6" stroke="#bbb"></path></svg>
            ${chev('gray')}
          </div>
          <div class="e-row h46">
            <svg width="30" height="30" viewBox="0 0 30 30"><path d="M18 1l11 11-17 17L1 17z" fill="#fff" stroke="#9c3cab" stroke-width="2"></path><path d="M1 17l7-9 11 13-7 8z" fill="#d89ae0" stroke="#9c3cab" stroke-width="2"></path></svg>
            ${chev()}
          </div>
        </div>
        <div class="big sort">
          <div class="ic e-ic">
            <svg width="64" height="60" viewBox="0 0 64 60">
              <text class="az" x="0" y="26">A</text>
              <text class="az" x="0" y="56">Z</text>
              <path d="M25 17h30L44 32v15h-8V32z" fill="none" stroke="#a6a6a6" stroke-width="2"></path>
            </svg>
          </div>
          <div class="t1 lbl8 off-t">Sort &</div>
          <div class="t2 off-t">Filter ${chev('gray')}</div>
        </div>
        <div class="big find">
          <div class="ic e-ic">
            <svg width="60" height="60" viewBox="0 0 60 60" fill="none" stroke="#333" stroke-width="2"><circle cx="38" cy="22.500" r="20" fill="#fafafa"/><path d="M23 38L2 59"/></svg>
          </div>
          <div class="t1 lbl8">Find &</div>
          <div class="t2">Select ${chev()}</div>
        </div>
      </div>
      <div class="label"><span>Editing</span></div>
    </div>`;
  }

  private renderAnalysis() {
    return html`<div class="group g-ana">
      <div class="body"><div class="big ana off-t">
        <div class="ic ana-ic">
          <svg width="68" height="64" viewBox="0 0 68 64" fill="none" stroke="#a6a6a6" stroke-width="2">
            <rect x="4" y="2" width="62" height="61" fill="#ececec" stroke-width="3"></rect>
            <path d="M4 10h62" stroke="#ccc" stroke-width="6"></path>
            <path d="M4 49h62M25 49v14M46 49v14M4 30h8M56 30h10" stroke="#c8c8c8"></path>
            <circle cx="34" cy="29" r="20" fill="#f3f3f3" stroke-width="3"></circle>
            <path d="M48 43l18 20" stroke-width="3"></path>
            <path d="M22 28h7v10h-7zM29 17h8v21h-8zM37 24h8v14h-8z" fill="#bdbdbd" stroke="none"></path>
          </svg>
        </div>
        <div class="t1 lbl6">Analyze</div>
        <div class="t2">Data</div>
      </div></div>
      <div class="label"><span>Analysis</span></div>
    </div>`;
  }

  private renderAddins() {
    return html`<div class="group g-add">
      <div class="body"><div class="big add off-t">
        <div class="ic ana-ic">
          <svg width="56" height="56" viewBox="0 0 56 56" fill="none" stroke="#a6a6a6" stroke-width="2"><rect x="1" y="1" width="54" height="54"/><rect x="7" y="7" width="19" height="18"/><rect x="31" y="7" width="19" height="18"/><rect x="7" y="31" width="19" height="18"/><rect x="31" y="31" width="19" height="18"/></svg>
        </div>
        <div class="t1 lbl6">Add-ins</div>
      </div></div>
      <div class="label"><span>Add-ins</span></div>
    </div>`;
  }

  private renderFormulaBar() {
    return html`<div class="fbar">
      <div class="fbox name"><span>Chart 1</span>${triDown}</div>
      <div class="dots">
        <svg width="4" height="20" viewBox="0 0 4 20" fill="#bbb"><rect width="4" height="4"></rect><rect y="8" width="4" height="4"></rect><rect y="16" width="4" height="4"></rect></svg>
      </div>
      <div class="fbox fx">
        <svg width="24" height="24" viewBox="0 0 24 24" fill="none" stroke="#bbb" stroke-width="2.4"><path d="M2 2l20 20M22 2L2 22"/></svg>
        <svg width="30" height="26" viewBox="0 0 30 26" fill="none" stroke="#bbb" stroke-width="3.4"><path d="M3 14l8 10L27 2"/></svg>
        <b>fx</b>
      </div>
      <div class="fbox input"><svg width="20" height="12" viewBox="0 0 20 12" fill="none" stroke="#555" stroke-width="2"><path d="M2 2l8 8 8-8"/></svg></div>
    </div>`;
  }

  private renderGrid() {
    const cols = GRID_COLS.map(c => `${c.w}px`).join(' ');
    const leftPad = new Set([0, 1, 4]); // these columns sit closer to the left edge
    return html`<div class="grid" style="grid-template-columns:${cols}">
      <div class="ch"><svg class="corner" viewBox="0 0 53 37"><path d="M51 3v31H20z" fill="#b9b9b9"></path></svg></div>
      ${GRID_COLS.slice(1).map((c, i) => html`<div class="ch ${i === 8 ? 'last' : ''}">${c.l}</div>`)}
      <div class="rh">1</div>
      ${HEADERS.map((h, i) => html`<div class="hd ${leftPad.has(i) ? 'p5' : ''}"><span>${h}</span>${i < 8 ? html`<div class="flt">${triDown}</div>` : ''}</div>`)}
      ${ROWS.map((r, i) => html`
        <div class="rh">${i + 2}</div>
        <div class="c p5">${r[0]}</div>
        <div class="c p5">${r[1]}</div>
        <div class="c">${r[2]}</div>
        <div class="c">None</div>
        <div class="c num">${r[3]}</div>
        <div class="c acc"><span>$</span><span>${r[4]}</span></div>
        <div class="c acc"><span>$</span><span>${r[5]}</span></div>
        <div class="c acc"><span>$</span><span>${r[6]}</span></div>
        <div class="c last"><span>$</span></div>
      `)}
    </div>`;
  }

  private renderChart() {
    const handles = [[1058, 651], [1539, 651], [2019, 651], [1058, 940], [2019, 940], [1058, 1228], [1539, 1228], [2019, 1228]];
    const px = (v: number) => v * UNIT;
    return html`<svg class="chart" viewBox="1057 651 962 577">
      <defs>
        <linearGradient id="fb" x1="0" y1="0" x2="0" y2="1"><stop offset="0" stop-color="#e4e4e4"></stop><stop offset="1" stop-color="#bcbcbc"></stop></linearGradient>
      </defs>
      <rect x="1058" y="651" width="961" height="577" fill="#fff" stroke="#666" stroke-width="2.5"></rect>
      <rect x="1079" y="667" width="275" height="36" fill="url(#fb)"></rect>
      <text class="pb" x="1083" y="692">Sum of Manufacturing Price</text>
      <text class="ttl" x="1610" y="760" text-anchor="middle" textLength="749">Sum of Manufacturing Price by Segment and Year</text>
      ${TICKS.map(t => svg`
        <rect x=${AXIS_X + px(t) - 1} y="803" width="2" height="361" fill="#d9d9d9"></rect>
        <text class="cat" x=${AXIS_X + px(t)} y="1204" text-anchor="middle">${t}</text>`)}
      ${SERIES.map(s => svg`
        <rect x=${AXIS_X} y=${s.y} width=${px(s.a)} height="19" fill="#ed7d31"></rect>
        <rect x=${AXIS_X} y=${s.y + 19} width=${px(s.b)} height="19" fill="#5b9bd5"></rect>
        <text class="cat" x="1387" y=${s.y + 26} text-anchor="end">${s.name}</text>`)}
      <rect x="1074" y="947" width="127" height="36" fill="url(#fb)"></rect>
      <text class="pb" x="1078" y="973">Segment</text>
      <path d="M1179 962h8l-4 6z" fill="#444"></path>
      <rect x="1910" y="938" width="90" height="36" fill="url(#fb)"></rect>
      <text class="pb" x="1913" y="963">Year</text>
      <path d="M1979 953h8l-4 6z" fill="#444"></path>
      <rect x="1920" y="990" width="13" height="14" fill="#ed7d31"></rect>
      <text class="cat" x="1939" y="1005">2014</text>
      <rect x="1920" y="1035" width="13" height="14" fill="#5b9bd5"></rect>
      <text class="cat" x="1939" y="1050">2013</text>
      ${handles.map(h => svg`<circle cx=${h[0]} cy=${h[1]} r="10" fill="#fff" stroke="#666" stroke-width="3.5"></circle>`)}
      <rect x="2043" y="653" width="54" height="53" fill="#fff" stroke="#777" stroke-width="2"></rect>
      <path d="M2047 678h45M2069 657v46" stroke="#3c9a50" stroke-width="2" fill="none"></path>
      <rect x="2043" y="728" width="54" height="53" fill="#fff" stroke="#777" stroke-width="2"></rect>
      <path d="M2088 736c1-3 4-2 3 1l-16 24-3-3z" fill="#fff" stroke="#555" stroke-width="2"></path>
      <path d="M2068 757c-3 0-5 3-6 6-1 3-4 5-6 5 5 3 15 3 18-4 1-3-2-7-6-7z" fill="#7fb8ea" stroke="#2b78c8" stroke-width="1.5"></path>
    </svg>`;
  }

  private renderPane() {
    return html`<div class="pane">
      <div class="p-title">
        <span>PivotChart...</span>
        <svg width="28" height="16" viewBox="0 0 28 16"><path d="M1 1l13 13L27 1"/></svg>
        <svg class="x" width="22" height="22" viewBox="0 0 22 22"><path d="M1 1l20 20M21 1L1 21"/></svg>
      </div>
      <div class="p-choose">
        <div class="txt">Choose fields to add to
report:</div>
        <div class="gear">
          <svg class="g" width="32" height="32" viewBox="0 0 32 32"><path d="M13 1h6l1 5 4 2 5-2 3 5-4 3v4l4 3-3 5-5-2-4 2-1 5h-6l-1-5-4-2-5 2-3-5 4-3v-4L1 11l3-5 5 2 4-2z" transform="translate(.5 .5) scale(.97)"/><circle cx="16" cy="16" r="5"/></svg>
          ${triDown}
        </div>
      </div>
      <div class="p-search">
        <span>Search</span>
        <svg width="32" height="32" viewBox="0 0 32 32" fill="none" stroke="#444" stroke-width="1.8"><circle cx="20" cy="12" r="10.5"/><path d="M12 20L1 31"/></svg>
      </div>
      <div class="list">
        <div class="items">
          ${FIELDS.map((f, i) => html`<div class="item">
            ${i === 0 || i === 5
              ? html`<div class="cb on"><svg viewBox="0 0 14 12"><path d="M1 6l4 4 8-9"/></svg></div>`
              : html`<div class="cb"></div>`}
            ${i === 0 ? html`<b>${f}</b>` : html`<span>${f}</span>`}
          </div>`)}
        </div>
        <div class="lscroll">
          <div class="sb b1">${triUp}</div>
          <div class="sb b2"></div>
          <div class="sb b3">${triDown}</div>
        </div>
      </div>
      <div class="drag">Drag fields between areas below:</div>
      <div class="areas">
        <div class="ar-v"></div>
        <div class="ar-h"></div>
        <div class="area a-tl">
          <div class="a-head">
            <svg viewBox="0 0 24 22" height="22"><path d="M0 0h24l-9 10v12H9V10z"/></svg>
            <span>Filters</span>
          </div>
          <div class="a-box"></div>
        </div>
        <div class="area a-tr">
          <div class="a-head r">
            <svg viewBox="0 0 24 22" height="22"><path d="M0 1h7v20H0zM9 1h1.500v20H9zM12.500 1H14v20h-1.500zM16 1h1.500v20H16zM19.500 1H21v20h-1.500z"/></svg>
            <span>Legend (S...</span>
          </div>
          <div class="a-box"><div class="pill"><span>Year</span>${triDown}</div></div>
        </div>
        <div class="area a-bl">
          <div class="a-head">
            <svg viewBox="0 0 24 22" height="20"><path d="M0 0h24v7H0zM0 9h24v1.500H0zM0 12.500h24V14H0zM0 16h24v1.500H0zM0 19.500h24V21H0z"/></svg>
            <span>Axis (Cate...</span>
          </div>
          <div class="a-box"><div class="pill"><span>Segment</span>${triDown}</div></div>
        </div>
        <div class="area a-br">
          <div class="a-head r">
            <svg viewBox="0 0 24 22" height="20"><path d="M1 0h20v4H8l7 7-7 7h14v4H1v-3l8-8-8-8z"/></svg>
            <span>Values</span>
          </div>
          <div class="a-box"><div class="pill"><span>Sum of ...</span>${triDown}</div></div>
        </div>
      </div>
      <div class="defer">
        <div class="cb"></div>
        <span>Defer Layout Up...</span>
        <div class="update">Update</div>
      </div>
    </div>`;
  }

  render() {
    return html`<div class="window">
      ${this.renderTitle()}
      ${this.renderTabs()}
      <div class="ribbon">
        ${this.renderClipboard()}
        ${this.renderFont()}
        ${this.renderAlignment()}
        ${this.renderNumber()}
        ${this.renderStyles()}
        ${this.renderCells()}
        ${this.renderEditing()}
        ${this.renderAnalysis()}
        ${this.renderAddins()}
        <div class="collapse"><svg viewBox="0 0 15 9"><path d="M1 8l6.500-6.500L14 8"/></svg></div>
      </div>
      ${this.renderFormulaBar()}
      <div class="main">
        <div class="left">
          <div class="sheet">
            <div class="gridwrap">
              ${this.renderGrid()}
              ${this.renderChart()}
            </div>
            <div class="vbar">
              <div class="sb vbtn">${triUp}</div>
              <div class="sb vth"></div>
              <div class="sb vbtn end">${triDown}</div>
            </div>
          </div>
          <div class="bottom">
            <div class="nav">
              <svg viewBox="0 0 9 22"><path d="M9 0v22L0 11z"/></svg>
              <svg viewBox="0 0 9 22"><path d="M0 0v22l9-11z"/></svg>
            </div>
            <div class="sht">Sheet2</div>
            <div class="sht on">Sheet1</div>
            <div class="plus">
              <svg width="30" height="30" viewBox="0 0 30 30"><circle cx="15" cy="15" r="14" fill="none" stroke="#888" stroke-width="2"></circle><path d="M15 8v14M8 15h14" stroke="#777" stroke-width="4"></path></svg>
            </div>
            <div class="hdots">
              <svg width="4" height="20" viewBox="0 0 4 20" fill="#bbb"><rect width="4" height="4"></rect><rect y="8" width="4" height="4"></rect><rect y="16" width="4" height="4"></rect></svg>
            </div>
            <div class="hbar">
              <div class="sb hbtn"><svg class="ar" viewBox="0 0 8 18"><path d="M8 0v18L0 9z"/></svg></div>
              <div class="sb hth"></div>
              <div class="sb hbtn end"><svg class="ar" viewBox="0 0 8 18"><path d="M0 0v18l8-9z"/></svg></div>
            </div>
          </div>
        </div>
        ${this.renderPane()}
      </div>
      <div class="status">
        <span class="s-ready">Ready</span>
        <span class="s-calc">Calculate</span>
        <svg class="s-acc" width="28" height="30" viewBox="0 0 28 30" fill="none" stroke="#555" stroke-width="1.6">
          <circle cx="11" cy="4" r="3"/><path d="M1 6c3 4 5 5 5 8 0 4-2 8-3 14h3c1-5 3-9 5-12M21 6c-3 4-5 5-5 8M15 18l10 11M25 18L15 29"/>
        </svg>
        <span>Accessibility: Investigate</span>
        <span class="s-av">Average: 57872</span>
        <span class="s-co">Count: 11200</span>
        <span class="s-su">Sum: 405101847</span>
        <div class="vbtns">
          <div class="on"><svg width="26" height="26" viewBox="0 0 26 26"><path d="M1 1h24v24H1zM1 9h24M1 17h24M9 1v24M17 1v24"/></svg></div>
          <div><svg width="26" height="28" viewBox="0 0 26 28"><path d="M1 1h24v26H1zM7 7h12v14H7zM9 11h8M9 14h8M9 17h8"/></svg></div>
          <div><svg width="28" height="26" viewBox="0 0 28 26"><path d="M1 1h26v24H1zM1 17h16M9 1v16M17 1v16"/></svg></div>
        </div>
        <span class="mark">© TechTerms.com</span>
      </div>
    </div>`;
  }
}

declare global {
  interface HTMLElementTagNameMap {
    'app-root': AppRoot;
  }
}
